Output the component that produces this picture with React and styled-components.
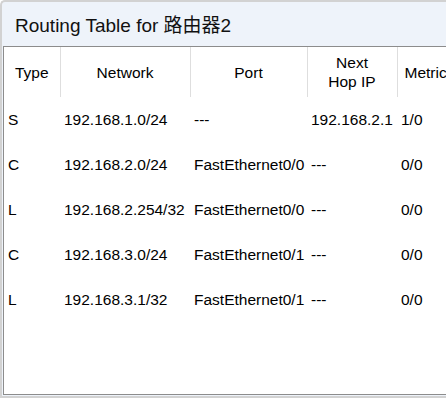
import React from 'react'
import styled, { createGlobalStyle } from 'styled-components'

const routes = [
  { type: 'S', network: '192.168.1.0/24', port: '---', nextHop: '192.168.2.1', metric: '1/0' },
  { type: 'C', network: '192.168.2.0/24', port: 'FastEthernet0/0', nextHop: '---', metric: '0/0' },
  { type: 'L', network: '192.168.2.254/32', port: 'FastEthernet0/0', nextHop: '---', metric: '0/0' },
  { type: 'C', network: '192.168.3.0/24', port: 'FastEthernet0/1', nextHop: '---', metric: '0/0' },
  { type: 'L', network: '192.168.3.1/32', port: 'FastEthernet0/1', nextHop: '---', metric: '0/0' },
]

const columns = [
  { key: 'type', label: 'Type', width: 56 },
  { key: 'network', label: 'Network', width: 130 },
  { key: 'port', label: 'Port', width: 117 },
  { key: 'nextHop', label: <>Next<br />Hop IP</>, width: 90 },
  { key: 'metric', label: 'Metric', width: 58 },
]

const App = () => (
  <>
    <GlobalStyle />
    <Window>
      <TitleBar>Routing Table for 路由器2</TitleBar>
      <Panel>
        <Table>
          <colgroup>
            {columns.map(c => (
              <col key={c.key} style={{ width: c.width }} />
            ))}
          </colgroup>
          <thead>
            <tr>
              {columns.map(c => (
                <HeadCell key={c.key}>{c.label}</HeadCell>
              ))}
            </tr>
          </thead>
          <tbody>
            {routes.map((r, i) => (
              <Row key={i}>
                {columns.map(c => (
                  <Cell key={c.key}>{r[c.key]}</Cell>
                ))}
              </Row>
            ))}
          </tbody>
        </Table>
      </Panel>
    </Window>
  </>
)

const GlobalStyle = createGlobalStyle`
  html, body {
    margin: 0;
    padding: 0;
    overflow: hidden;
    background: #ffffff;
  }
  body {
    font-family: "Liberation Sans", Arial, "Noto Sans CJK SC", sans-serif;
  }
`

const Window = styled.div`
  width: 446px;
  height: 398px;
  box-sizing: border-box;
  display: flex;
  flex-direction: column;
  overflow: hidden;
  border: 2px solid #d2d2d2;
  border-right: none;
  border-top-left-radius: 5px;
  padding-left: 1px;
  background: #eef3fa;
`

const TitleBar = styled.div`
  height: 44px;
  flex: none;
  display: flex;
  align-items: center;
  padding: 0 0 2px 12px;
  box-sizing: border-box;
  font-size: 19px;
  color: #111111;
  font-family: "Liberation Sans", Arial, "Noto Sans CJK SC", sans-serif;
`

const Panel = styled.div`
  flex: 1;
  min-width: 0;
  overflow: hidden;
  background: #ffffff;
  border: 1px solid #8c8c8c;
  border-right: none;
  margin-bottom: 1px;
`

const Table = styled.table`
  table-layout: fixed;
  border-collapse: collapse;
  width: 451px;
  font-size: 15.5px;
  color: #000000;
`

const HeadCell = styled.th`
  height: 50px;
  padding: 0 4px;
  font-weight: normal;
  text-align: center;
  line-height: 19px;
  border-right: 1px solid #dedede;
  white-space: nowrap;
  overflow: hidden;

  &:last-child {
    border-right: none;
    text-align: left;
    padding-left: 7px;
  }
`

const Row = styled.tr`
  height: 45px;
`

const Cell = styled.td`
  padding: 0 0 0 4px;
  white-space: nowrap;
  overflow: hidden;
`

export default App
